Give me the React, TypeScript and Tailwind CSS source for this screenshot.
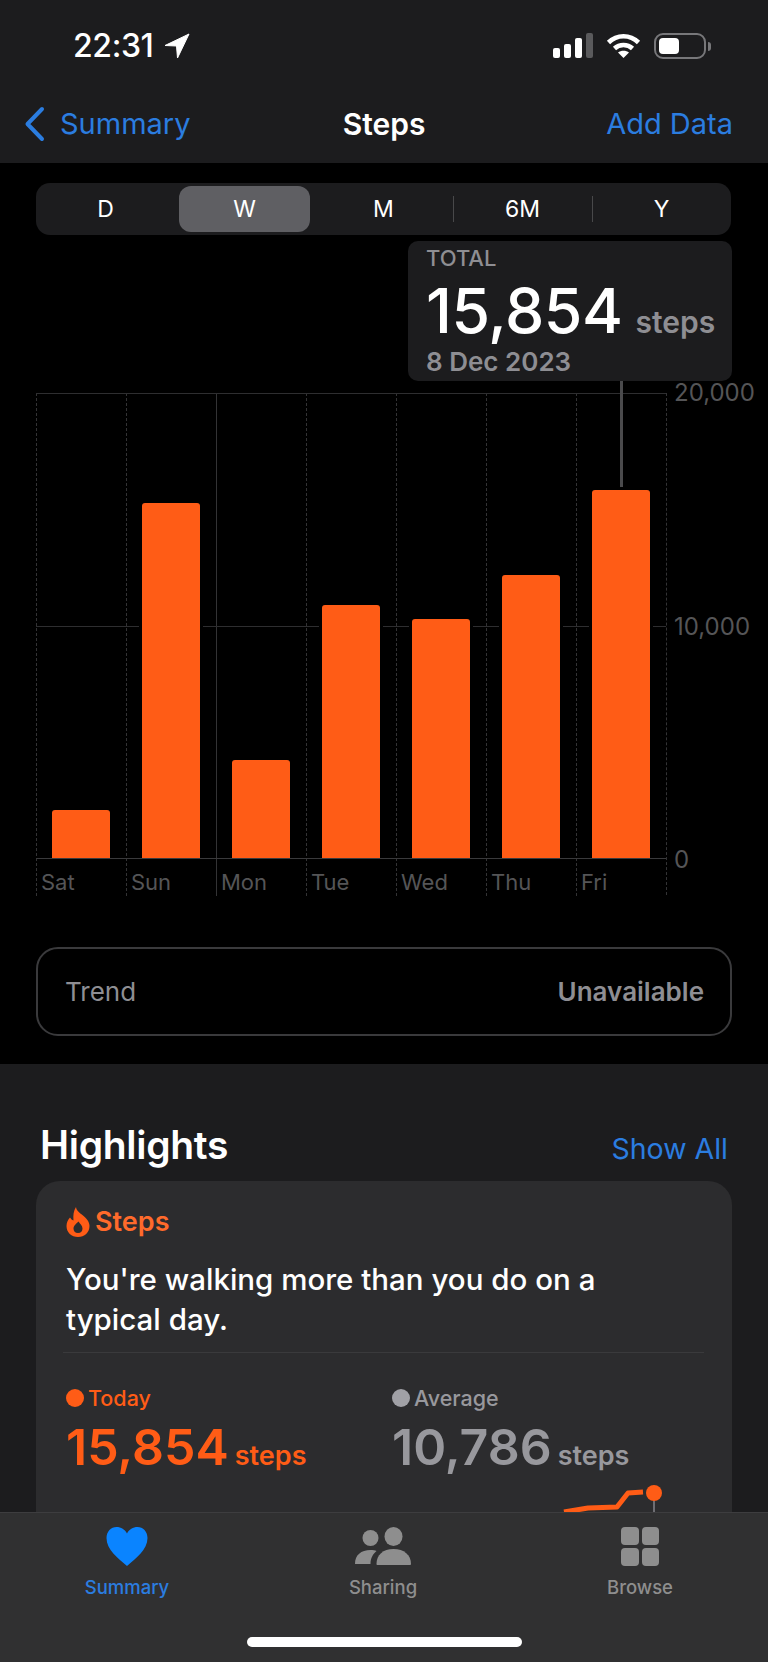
const ranges = ['D', 'W', 'M', '6M', 'Y'];

const days = [
  { label: 'Sat', bar: 'h-[48px]', line: 'border-dashed' },
  { label: 'Sun', bar: 'h-[355px]', line: 'border-dashed' },
  { label: 'Mon', bar: 'h-[98px]', line: 'border-solid' },
  { label: 'Tue', bar: 'h-[253px]', line: 'border-dashed' },
  { label: 'Wed', bar: 'h-[239px]', line: 'border-dashed' },
  { label: 'Thu', bar: 'h-[283px]', line: 'border-dashed' },
  { label: 'Fri', bar: 'h-[368px]', line: 'border-dashed' },
];

function StatusBar() {
  return (
    <div className="flex h-[92px] items-start justify-between pl-[73px] pr-[57px] pt-[26px]">
      <div className="flex items-center gap-[10px]">
        <span className="text-[32px] font-medium leading-[40px] tracking-[-0.4px] text-white">22:31</span>
        <svg width="26" height="26" viewBox="0 0 26 26">
          <path d="M25 1 L1 12.5 L12.5 13 L13.5 25 Z" fill="#fff" stroke="#fff" strokeWidth="1" strokeLinejoin="round" />
        </svg>
      </div>
      <div className="mt-[7px] flex items-center">
        <svg width="40" height="26" viewBox="0 0 40 26">
          <rect x="0" y="15" width="7" height="10" rx="2" fill="#fff" />
          <rect x="11" y="11" width="7" height="14" rx="2" fill="#fff" />
          <rect x="22" y="5" width="7" height="20" rx="2" fill="#fff" />
          <rect x="33" y="0" width="7" height="25" rx="2" fill="#5a5a5c" />
        </svg>
        <svg className="ml-[13px]" width="35" height="26" viewBox="0 0 35 26" fill="none" stroke="#fff" strokeWidth="4.6">
          <path d="M2.5 9.5 C11 1.2 24 1.2 32.5 9.5" />
          <path d="M8.5 15.5 C13.5 10.8 21.5 10.8 26.5 15.5" />
          <path d="M17.5 25 L12 19.6 C15 17 20 17 23 19.6 Z" fill="#fff" stroke="none" />
        </svg>
        <div className="ml-[13px] flex h-[26px] w-[52px] rounded-[9px] border-2 border-[#77777a] p-[3px]">
          <div className="h-full w-[20px] rounded-[4px] bg-white" />
        </div>
        <div className="ml-[2px] h-[9px] w-[3px] rounded-r-[3px] bg-[#77777a]" />
      </div>
    </div>
  );
}

function NavBar() {
  return (
    <div className="relative flex h-[71px] items-start justify-between pl-[24px] pr-[35px] pt-[14px]">
      <div className="flex items-center gap-[15px]">
        <svg width="21" height="36" viewBox="0 0 21 36" fill="none" stroke="#2b7de0" strokeWidth="4" strokeLinecap="round" strokeLinejoin="round">
          <path d="M18 3 L3.5 18 L18 33" />
        </svg>
        <span className="text-[29px] leading-[36px] text-[#2b7de0]">Summary</span>
      </div>
      <span className="absolute left-0 right-0 top-[14px] text-center text-[30px] font-semibold leading-[36px] text-white">Steps</span>
      <span className="text-[29px] leading-[36px] text-[#2b7de0]">Add Data</span>
    </div>
  );
}

function RangePicker() {
  return (
    <div className="mx-[36px] flex h-[52px] w-[695px] items-center rounded-[14px] bg-[#1c1c1e]">
      {ranges.map((r, i) => (
        <div key={r} className="relative flex h-[46px] flex-1 items-center justify-center">
          {r === 'W' ? (
            <div className="flex h-full w-[131px] items-center justify-center rounded-[12px] bg-[#5f5f63] text-[23px] text-white">{r}</div>
          ) : (
            <span className="text-[23px] text-white">{r}</span>
          )}
          {i > 2 && <div className="absolute left-0 top-[10px] h-[26px] w-px bg-[#48484a]" />}
        </div>
      ))}
    </div>
  );
}

function Callout() {
  return (
    <div className="ml-[408px] mt-[6px] h-[140px] w-[324px] rounded-[10px] bg-[#1c1c1e] pl-[18px] pt-[3px]">
      <div className="text-[22px] font-medium leading-[28px] text-[#8e8e93]">TOTAL</div>
      <div className="mt-[3px] flex items-baseline gap-[13px]">
        <span className="text-[62.5px] font-medium leading-[70px] tracking-[-0.5px] text-white">15,854</span>
        <span className="text-[30px] font-semibold leading-[36px] text-[#8e8e93]">steps</span>
      </div>
      <div className="mt-[1px] text-[26px] font-semibold leading-[32px] text-[#8e8e93]">8 Dec 2023</div>
    </div>
  );
}

function Chart() {
  return (
    <div className="relative ml-[36px] mt-[12px] flex h-[502px]">
      <div className="relative grid w-[631px] grid-cols-7 border-r border-dashed border-[#333335]">
        {days.map((d) => (
          <div key={d.label} className={`flex flex-col border-l border-[#333335] ${d.line}`}>
            <div className="relative z-10 flex h-[465px] items-end pl-[12px]">
              <div className={`w-[64px] bg-black px-[3px] ${d.bar}`}>
                <div className="h-full rounded-t-[3px] bg-[#ff5c16]" />
              </div>
            </div>
            <span className="pl-[4px] pt-[10px] text-[22px] leading-[28px] text-[#555557]">{d.label}</span>
          </div>
        ))}
        <div className="absolute left-0 right-0 top-0 h-px bg-[#2e2e30]" />
        <div className="absolute left-0 right-0 top-[233px] h-px bg-[#2e2e30]" />
        <div className="absolute left-0 right-0 top-[465px] z-20 h-px bg-[#3a3a3c]" />
        <div className="absolute left-[584px] top-[-12px] h-[106px] w-[3px] bg-[#4a4a4c]" />
      </div>
      <div className="-mt-[14px] ml-[7px] flex h-[495px] flex-col justify-between text-[24px] leading-[28px] text-[#555557]">
        <span>20,000</span>
        <span>10,000</span>
        <span>0</span>
      </div>
    </div>
  );
}

function Flame() {
  return (
    <svg width="24" height="30" viewBox="0 0 24 30">
      <path
        fillRule="evenodd"
        fill="#ff5c16"
        d="M10 0 C10.5 4 14 6 17 8.5 C21 12 23.5 15 23.5 19 C23.5 25.5 18.5 30 12 30 C5.5 30 0.5 25.5 0.5 19 C0.5 15.5 2 12.5 4 10.5 C5 12 6 13 7.5 13.5 C7 8.5 7.5 3.5 10 0 Z M12 26 C15 26 16.5 24 16.5 21.5 C16.5 18.5 14 17 12.5 14.5 C10.5 16.5 7.5 18.5 7.5 21.5 C7.5 24 9 26 12 26 Z"
      />
    </svg>
  );
}

function Stat({ label, value, dot, text, className }: { label: string; value: string; dot: string; text: string; className: string }) {
  return (
    <div className={className}>
      <div className={`flex items-center gap-[4px] text-[21.5px] font-medium leading-[28px] ${text}`}>
        <div className={`h-[18px] w-[18px] rounded-full ${dot}`} />
        {label}
      </div>
      <div className={`mt-[5px] flex items-baseline gap-[6px] ${text}`}>
        <span className="text-[50px] font-semibold leading-[60px]">{value}</span>
        <span className="text-[27px] font-semibold leading-[32px]">steps</span>
      </div>
    </div>
  );
}

function Highlights() {
  return (
    <section className="bg-[#1c1c1e] px-[36px] pt-[58px]">
      <div className="flex items-center justify-between pl-[4px] pr-[4px]">
        <h2 className="text-[39px] font-semibold leading-[46px] tracking-[-0.3px] text-white">Highlights</h2>
        <span className="mt-[8px] text-[28.5px] leading-[36px] text-[#2b7de0]">Show All</span>
      </div>
      <div className="mt-[13px] h-[500px] w-[696px] rounded-[24px] bg-[#2c2c2e] pl-[30px] pr-[28px] pt-[24px]">
        <div className="flex items-center gap-[5px]">
          <Flame />
          <span className="text-[27px] font-semibold leading-[34px] text-[#ff6a2b]">Steps</span>
        </div>
        <p className="mt-[20px] text-[29.5px] font-medium leading-[40px] text-white">
          You're walking more than you do on a
          <br />
          typical day.
        </p>
        <div className="-ml-[3px] mt-[13px] h-px bg-[#3a3a3c]" />
        <div className="mt-[31px] flex">
          <Stat className="w-[326px]" label="Today" value="15,854" dot="bg-[#ff5c16]" text="text-[#ff5c16]" />
          <Stat className="" label="Average" value="10,786" dot="bg-[#a1a1a6]" text="text-[#98989d]" />
        </div>
        <svg className="ml-[230px]" width="400" height="50" viewBox="0 0 400 50" fill="none">
          <path d="M268 35 L292 31 L321 30 L332 16 L347 15" stroke="#ff5c16" strokeWidth="5" strokeLinejoin="round" />
          <line x1="358" y1="22" x2="358" y2="50" stroke="#6e6e73" strokeWidth="2" />
          <circle cx="358" cy="16" r="8" fill="#ff5c16" />
        </svg>
      </div>
    </section>
  );
}

function TabBar() {
  return (
    <div className="absolute bottom-0 left-0 right-0 h-[150px] border-t border-[#3d3d3f] bg-[#303031]">
      <div className="flex pt-[14px]">
        <div className="flex w-[254px] flex-col items-center">
          <svg width="42" height="39" viewBox="0 0 42 39">
            <path fill="#0a84ff" d="M21 39 C12 31 0.5 23 0.5 11 C0.5 4.5 5 0 10.5 0 C15 0 19 2.5 21 6.5 C23 2.5 27 0 31.5 0 C37 0 41.5 4.5 41.5 11 C41.5 23 30 31 21 39 Z" />
          </svg>
          <span className="mt-[9px] text-[18.5px] font-medium leading-[24px] text-[#2b7de0]">Summary</span>
        </div>
        <div className="flex w-[258px] flex-col items-center">
          <svg width="56" height="39" viewBox="0 0 56 39" fill="#8e8e8e">
            <circle cx="15.5" cy="11" r="8" />
            <ellipse cx="38.5" cy="9.5" rx="9" ry="9.5" />
            <path d="M0 37 C0 28 6 23 15.5 23 C18 23 20 23.3 21.5 24 C18 27 15.5 31 15.5 37 Z" />
            <path d="M21.5 37 C21.5 28 28 22 38.5 22 C49 22 56 28 56 37 C56 38 55 38 54 38 L23 38 C22 38 21.5 38 21.5 37 Z" />
          </svg>
          <span className="mt-[9px] text-[18.5px] font-medium leading-[24px] text-[#8e8e8e]">Sharing</span>
        </div>
        <div className="flex w-[256px] flex-col items-center">
          <div className="grid h-[39px] w-[38px] grid-cols-2 gap-[3px]">
            <div className="rounded-[4px] bg-[#8e8e8e]" />
            <div className="rounded-[4px] bg-[#8e8e8e]" />
            <div className="rounded-[4px] bg-[#8e8e8e]" />
            <div className="rounded-[4px] bg-[#8e8e8e]" />
          </div>
          <span className="mt-[9px] text-[18.5px] font-medium leading-[24px] text-[#8e8e8e]">Browse</span>
        </div>
      </div>
      <div className="mx-auto mt-[38px] h-[10px] w-[275px] rounded-full bg-white" />
    </div>
  );
}

export default function App() {
  return (
    <div className="relative h-[1662px] w-[768px] overflow-hidden bg-black font-['Inter',sans-serif]">
      <header className="h-[163px] bg-[#1c1c1e]">
        <StatusBar />
        <NavBar />
      </header>
      <main className="h-[901px] bg-black pt-[20px]">
        <RangePicker />
        <Callout />
        <Chart />
        <div className="mx-[36px] mt-[52px] flex h-[89px] w-[696px] items-center justify-between rounded-[22px] border-2 border-[#3a3a3c] pl-[27px] pr-[26px] text-[26px] text-[#8e8e93]">
          <span>Trend</span>
          <span className="font-semibold">Unavailable</span>
        </div>
      </main>
      <Highlights />
      <TabBar />
    </div>
  );
}
